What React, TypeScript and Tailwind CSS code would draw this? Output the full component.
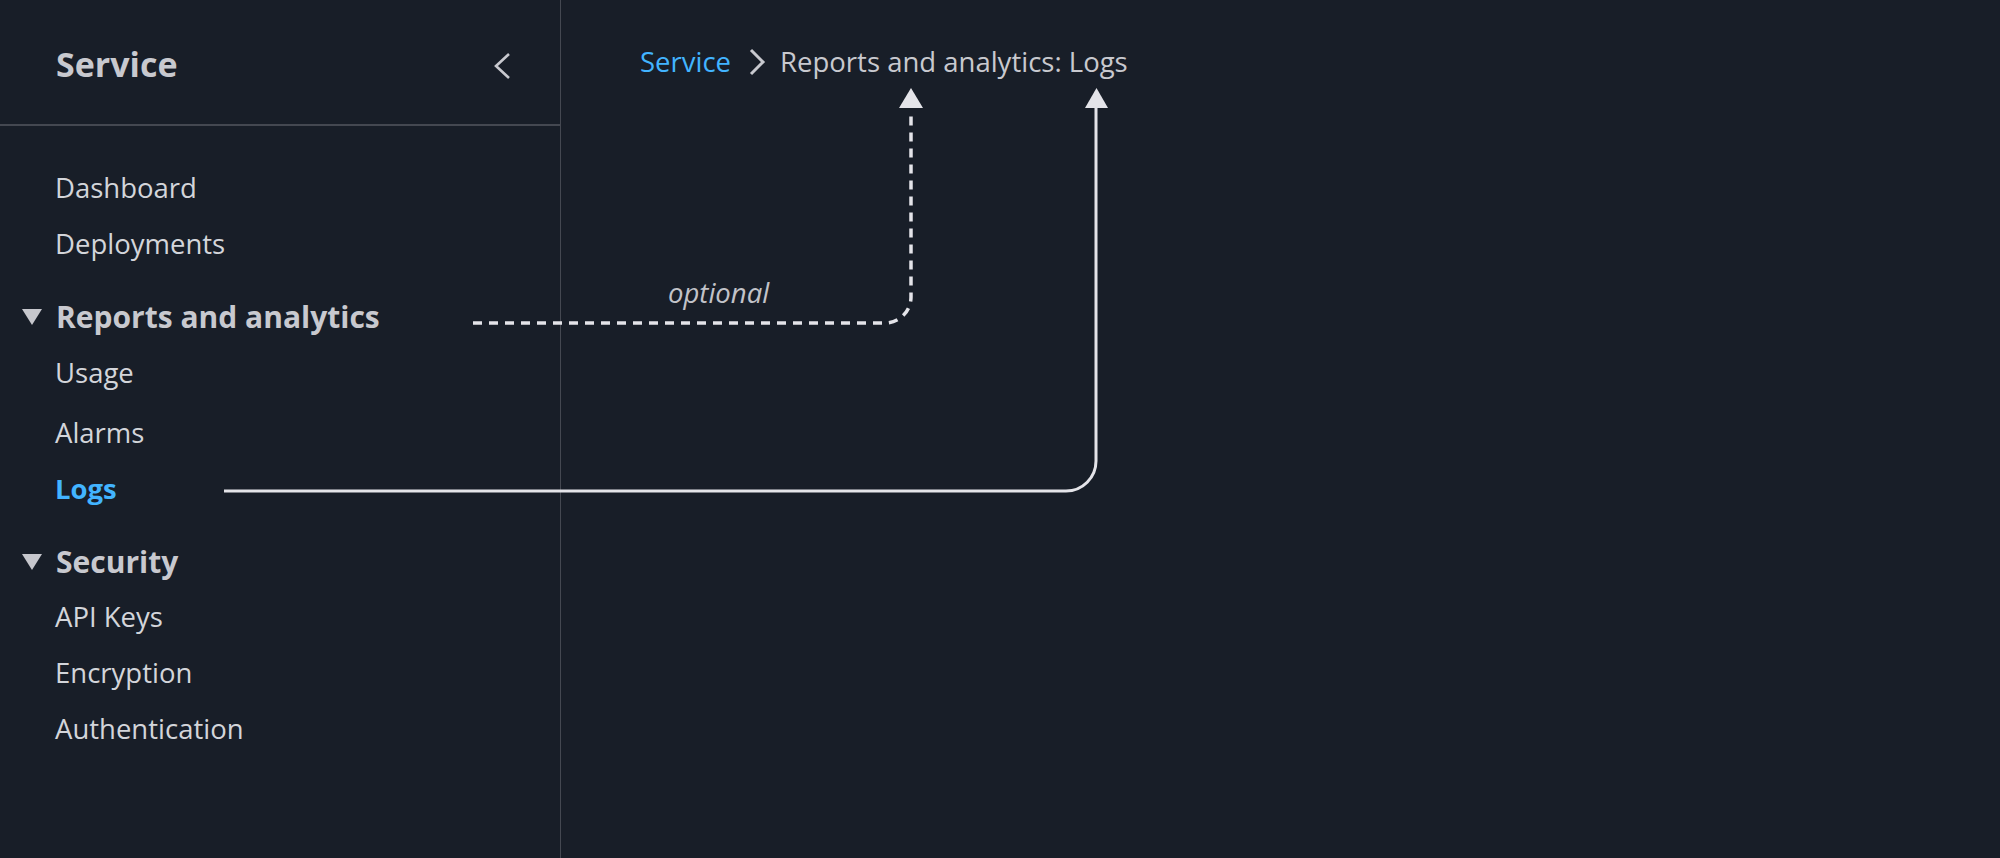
import React from 'react';

type NavLink = { label: string; active?: boolean; gap?: string };
type NavSection = { title: string; gap: string; items: NavLink[] };

const topLinks: NavLink[] = [{ label: 'Dashboard' }, { label: 'Deployments' }];

const sections: NavSection[] = [
  {
    title: 'Reports and analytics',
    gap: 'mt-[17px]',
    items: [{ label: 'Usage' }, { label: 'Alarms', gap: 'mt-[4px]' }, { label: 'Logs', active: true }],
  },
  {
    title: 'Security',
    gap: 'mt-[17px]',
    items: [{ label: 'API Keys', gap: '-mt-px' }, { label: 'Encryption' }, { label: 'Authentication' }],
  },
];

function Caret() {
  return (
    <svg width="20" height="16" viewBox="0 0 20 16" className="shrink-0">
      <polygon points="0,0 20,0 10,16" fill="#c6c7cd" />
    </svg>
  );
}

function Link({ item }: { item: NavLink }) {
  return (
    <a
      href="#"
      className={`block h-[56px] pl-[55px] text-[27.5px] leading-[56px] ${item.gap ?? ''} ${
        item.active ? 'font-bold text-[#42b4ff]' : 'text-[#d3d5da]'
      }`}
    >
      {item.label}
    </a>
  );
}

function Sidebar() {
  return (
    <aside className="flex w-[561px] shrink-0 flex-col border-r border-[#444851]">
      <div className="flex h-[126px] items-center justify-between border-b-2 border-[#444851] pl-[56px] pr-[50px]">
        <h2 className="mt-[3px] text-[34px] font-bold leading-[44px] text-[#c8c9cf]">Service</h2>
        <button className="mt-[8px]">
          <svg width="16" height="26" viewBox="0 0 16 26" className="overflow-visible">
            <polyline points="15,1 2,13 15,25" fill="none" stroke="#c8c9cf" strokeWidth="2.6" />
          </svg>
        </button>
      </div>

      <nav className="pt-[34px]">
        {topLinks.map((item) => (
          <Link key={item.label} item={item} />
        ))}
        {sections.map((section) => (
          <div key={section.title} className={section.gap}>
            <div className="flex h-[56px] items-center pl-[22px]">
              <Caret />
              <span className="ml-[14px] text-[30px] font-bold leading-[56px] text-[#c8c9cf]">{section.title}</span>
            </div>
            {section.items.map((item) => (
              <Link key={item.label} item={item} />
            ))}
          </div>
        ))}
      </nav>
    </aside>
  );
}

function Breadcrumbs() {
  return (
    <div className="flex items-center pl-[79px] pt-[42px] text-[27.5px] leading-[40px]">
      <a href="#" className="text-[#42b4ff]">
        Service
      </a>
      <svg width="16" height="26" viewBox="0 0 16 26" className="ml-[18px] mr-[15px] overflow-visible">
        <polyline points="2,1 14,13 2,25" fill="none" stroke="#c8c9cf" strokeWidth="3" />
      </svg>
      <span className="text-[#c8c9cf]">Reports and analytics: Logs</span>
    </div>
  );
}

// Annotation arrows: which nav entries feed which breadcrumb segment
function Connectors() {
  return (
    <svg className="pointer-events-none absolute inset-0 h-full w-full" width="2000" height="858">
      <path
        d="M473 323 H885 A26 26 0 0 0 911 297 V110"
        fill="none"
        stroke="#e4e4e9"
        strokeWidth="3.5"
        strokeDasharray="9 7"
      />
      <polygon points="899,108 923,108 911,88" fill="#e4e4e9" />
      <path d="M224 491 H1066 A30 30 0 0 0 1096 461 V106" fill="none" stroke="#e4e4e9" strokeWidth="3" />
      <polygon points="1085,108 1108,108 1096.5,88" fill="#e4e4e9" />
    </svg>
  );
}

export default function App() {
  return (
    <div className="relative flex h-screen w-full overflow-hidden bg-[#181e28] font-['Open_Sans',sans-serif]">
      <Sidebar />
      <main className="flex-1">
        <Breadcrumbs />
      </main>
      <Connectors />
      <span className="absolute left-[668px] top-[275px] text-[27.5px] italic leading-[36px] text-[#c2c3c9]">
        optional
      </span>
    </div>
  );
}
